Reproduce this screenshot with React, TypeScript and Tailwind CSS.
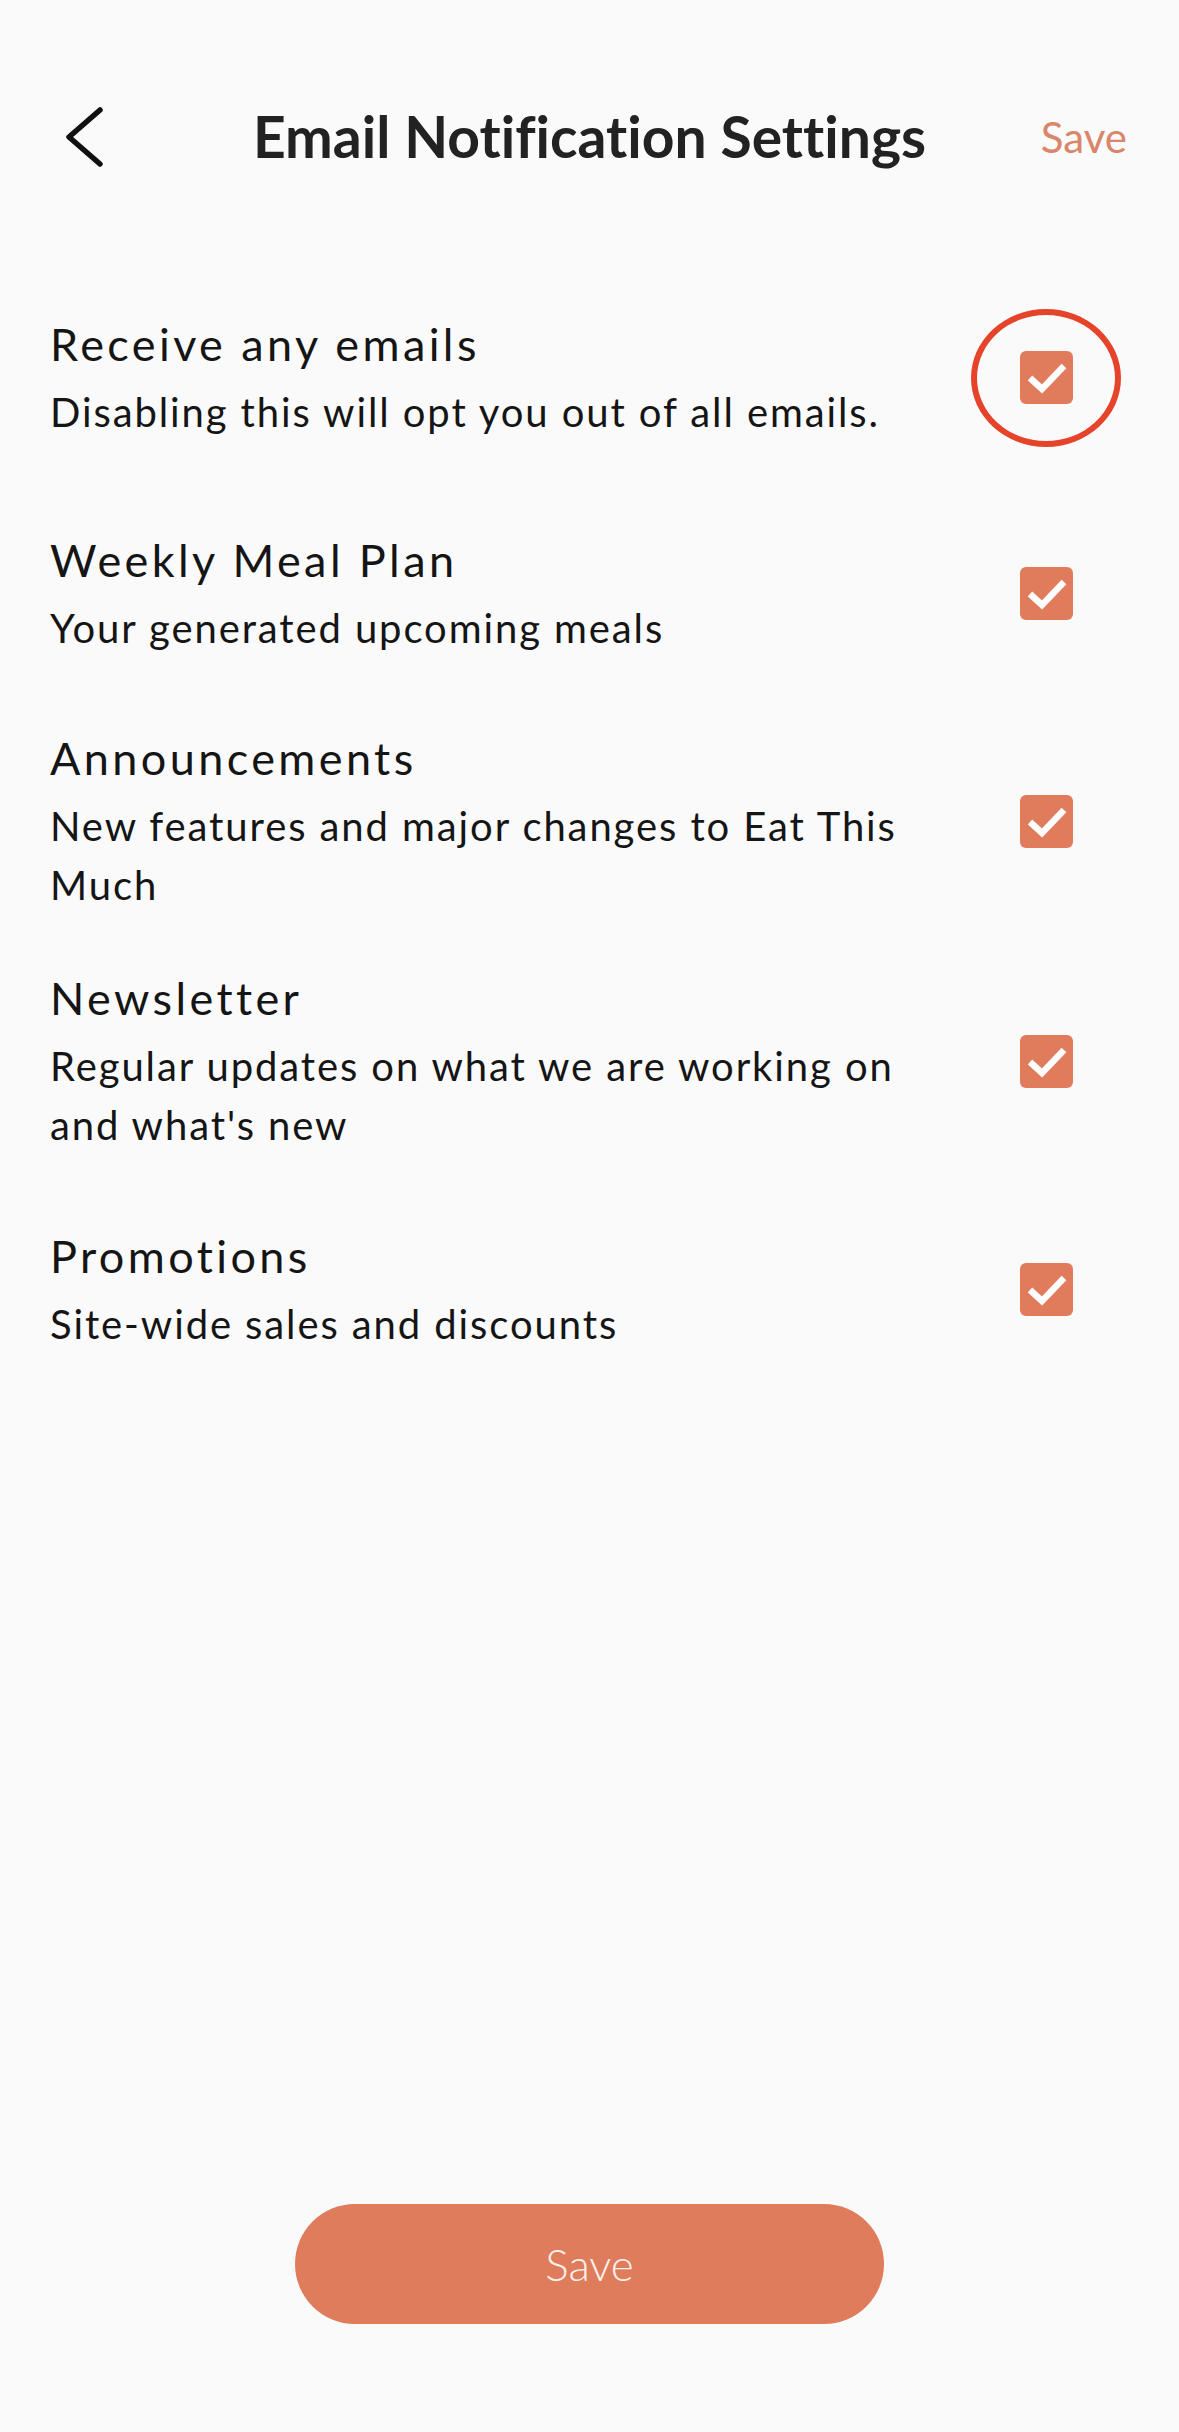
import { useState } from 'react'

type Pref = {
  id: string
  title: string
  description: string
}

const prefs: Pref[] = [
  { id: 'any', title: 'Receive any emails', description: 'Disabling this will opt you out of all emails.' },
  { id: 'weekly', title: 'Weekly Meal Plan', description: 'Your generated upcoming meals' },
  { id: 'announcements', title: 'Announcements', description: 'New features and major changes to Eat This Much' },
  { id: 'newsletter', title: 'Newsletter', description: "Regular updates on what we are working on and what's new" },
  { id: 'promotions', title: 'Promotions', description: 'Site-wide sales and discounts' },
]

function Checkbox({ checked, onClick }: { checked: boolean; onClick: () => void }) {
  return (
    <button
      onClick={onClick}
      className={`w-[53px] h-[53px] rounded-[6px] flex items-center justify-center shrink-0 ${
        checked ? 'bg-[#e07c5c]' : 'border-4 border-[#e07c5c] bg-transparent'
      }`}
    >
      {checked && (
        <svg width="53" height="53" viewBox="0 0 53 53" fill="none">
          <polyline points="10,27 22,38 44,15" stroke="white" strokeWidth="6.5" strokeLinejoin="miter" />
        </svg>
      )}
    </button>
  )
}

export default function App() {
  const [checked, setChecked] = useState<Record<string, boolean>>({
    any: true,
    weekly: true,
    announcements: true,
    newsletter: true,
    promotions: true,
  })

  const toggle = (id: string) => setChecked((c) => ({ ...c, [id]: !c[id] }))

  return (
    <div className="min-h-[2432px] w-[1179px] bg-[#fafafa] flex flex-col font-['Lato',sans-serif] text-[#151515] [font-variant-ligatures:none]">
      {/* Header */}
      <div className="mt-[72px] h-[130px] grid grid-cols-[1fr_auto_1fr] items-center">
        <div className="pl-[64px]">
          <svg width="40" height="62" viewBox="0 0 40 62" fill="none">
            <polyline points="36,4 5,31 36,58" stroke="#111" strokeWidth="5.5" strokeLinecap="round" strokeLinejoin="round" />
          </svg>
        </div>
        <h1 className="text-[57px] font-bold text-[#222]">Email Notification Settings</h1>
        <div className="flex justify-end pr-[52px]">
          <span className="text-[42px] text-[#d9866a]">Save</span>
        </div>
      </div>

      {/* Preferences */}
      <div className="mt-[93px] flex flex-col gap-[52px] pl-[50px] pr-[106px]">
        {prefs.map((p) => (
          <div key={p.id} className="min-h-[164px] flex items-center gap-[70px]">
            <div className="flex-1">
              <div className="text-[45px] leading-[62px] tracking-[3.4px]">{p.title}</div>
              <div className="mt-[8px] text-[40px] leading-[59px] tracking-[1.9px]">{p.description}</div>
            </div>
            <div className="relative">
              <Checkbox checked={checked[p.id]} onClick={() => toggle(p.id)} />
              {p.id === 'any' && (
                <div className="absolute left-[-49px] top-[-42px] w-[150px] h-[138px] rounded-[50%] border-[6px] border-[#e5432a] pointer-events-none" />
              )}
            </div>
          </div>
        ))}
      </div>

      {/* Bottom save */}
      <div className="mt-auto mb-[108px] flex justify-center">
        <button className="w-[589px] h-[120px] rounded-full bg-[#df7c5c] text-[#fdf1ec] text-[44px] font-light">
          Save
        </button>
      </div>
    </div>
  )
}
